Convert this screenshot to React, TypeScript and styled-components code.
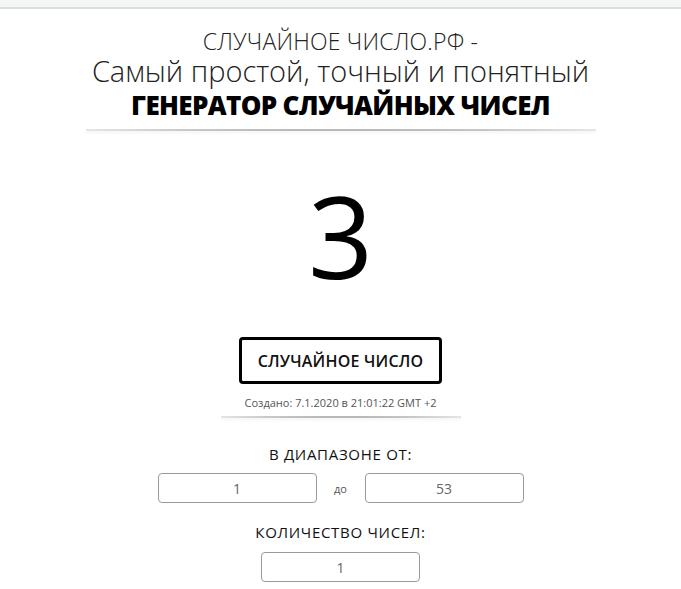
import styled, { createGlobalStyle } from 'styled-components';

const GlobalStyle = createGlobalStyle`
  html, body {
    margin: 0;
    padding: 0;
    background: #ffffff;
    font-family: "Open Sans", "Liberation Sans", sans-serif;
    color: #111111;
  }
`;

const App = () => {
  return (
    <>
      <GlobalStyle />
      <TopBar />
      <Page>
        <Header>
          <Site>СЛУЧАЙНОЕ ЧИСЛО.РФ -</Site>
          <Slogan>Самый простой, точный и понятный</Slogan>
          <Headline>ГЕНЕРАТОР СЛУЧАЙНЫХ ЧИСЕЛ</Headline>
        </Header>
        <Divider $width={510} $top={7} />
        <Result>3</Result>
        <GenerateButton type="button">СЛУЧАЙНОЕ ЧИСЛО</GenerateButton>
        <Created>Создано: 7.1.2020 в 21:01:22 GMT +2</Created>
        <Divider $width={240} $top={6} />
        <Label $top={26}>В ДИАПАЗОНЕ ОТ:</Label>
        <RangeRow>
          <NumberInput defaultValue="1" />
          <RangeWord>до</RangeWord>
          <NumberInput defaultValue="53" />
        </RangeRow>
        <Label $top={19}>КОЛИЧЕСТВО ЧИСЕЛ:</Label>
        <NumberInput defaultValue="1" />
      </Page>
    </>
  );
};

export default App;

const TopBar = styled.div`
  height: 7px;
  background: #f4f5f5;
  border-bottom: 2px solid #dcdddd;
`;

const Page = styled.main`
  display: flex;
  flex-direction: column;
  align-items: center;
`;

const Header = styled.header`
  display: flex;
  flex-direction: column;
  align-items: center;
  padding-top: 19px;
`;

const Site = styled.div`
  font-size: 23px;
  font-weight: 300;
  line-height: 26px;
  letter-spacing: 0.2px;
  color: #222;
`;

const Slogan = styled.div`
  font-size: 29px;
  font-weight: 300;
  line-height: 34px;
  color: #222;
`;

const Headline = styled.h1`
  margin: 0;
  font-size: 26px;
  font-weight: 800;
  font-stretch: 96%;
  letter-spacing: -0.65px;
  line-height: 34px;
  color: #000;
`;

const Divider = styled.div<{ $width: number; $top: number }>`
  width: ${(p) => p.$width}px;
  height: 2px;
  margin-top: ${(p) => p.$top}px;
  background: radial-gradient(ellipse at center, #9a9a9a 0%, #c8c8c8 55%, rgba(255, 255, 255, 0) 100%);
  box-shadow: 0 2px 3px rgba(0, 0, 0, 0.06);
`;

const Result = styled.div`
  margin-top: 24px;
  font-size: 114px;
  font-weight: 400;
  line-height: 160px;
  color: #000;
`;

const GenerateButton = styled.button`
  margin-top: 22px;
  width: 203px;
  height: 47px;
  border: 3px solid #000;
  border-radius: 4px;
  background: #fff;
  font-family: inherit;
  font-size: 16px;
  font-weight: 600;
  letter-spacing: 0.2px;
  color: #111;
  cursor: pointer;
`;

const Created = styled.div`
  margin-top: 12px;
  font-size: 11px;
  line-height: 14px;
  color: #555;
`;

const Label = styled.div<{ $top: number }>`
  margin-top: ${(p) => p.$top}px;
  font-size: 15px;
  font-weight: 400;
  letter-spacing: 0.7px;
  line-height: 20px;
  color: #111;
`;

const RangeRow = styled.div`
  display: flex;
  align-items: center;
  gap: 12px;
  margin-top: 9px;
`;

const RangeWord = styled.span`
  width: 24px;
  text-align: center;
  font-size: 11px;
  color: #555;
`;

const NumberInput = styled.input.attrs({ type: 'text' })`
  box-sizing: border-box;
  width: 159px;
  height: 30px;
  border: 1px solid #9a9a9a;
  border-radius: 4px;
  background: #fff;
  text-align: center;
  font-family: inherit;
  font-size: 14px;
  color: #666;
  outline: none;
  ${Label} + & {
    margin-top: 10px;
  }
`;
